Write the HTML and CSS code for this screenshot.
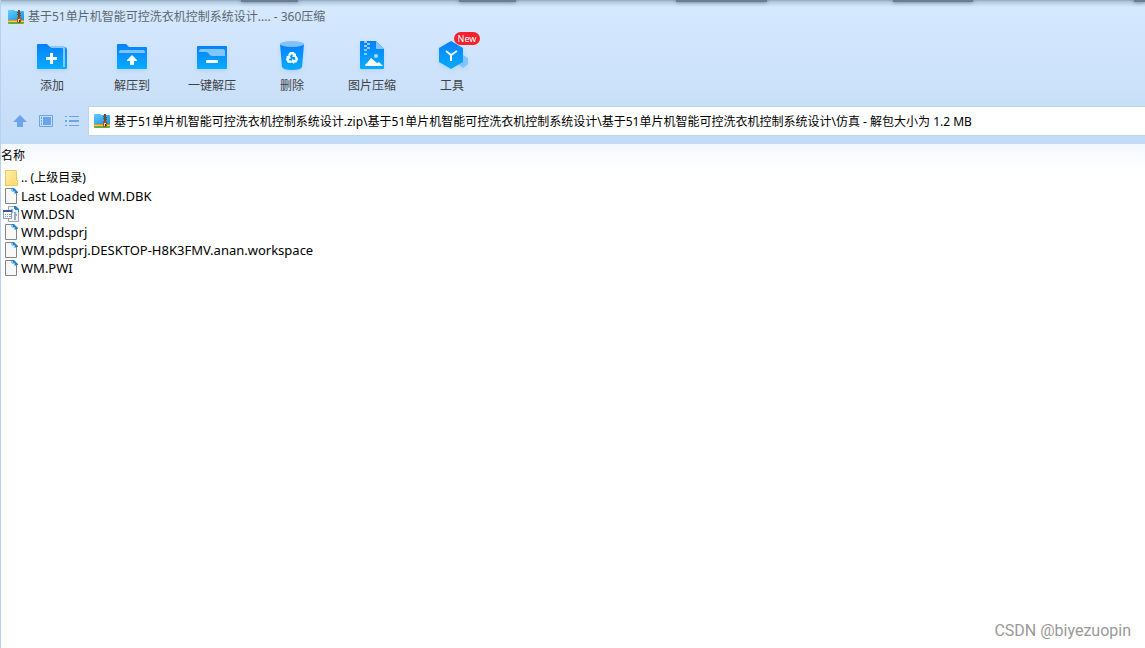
FILE: index.html
```html
<!DOCTYPE html>
<html lang="zh-CN">
<head>
<meta charset="utf-8">
<title>360压缩</title>
<meta name="viewport" content="width=device-width, initial-scale=1">
<link rel="stylesheet" href="styles.css">
</head>
<body>
<svg class="defs" aria-hidden="true">
  <defs>
    <linearGradient id="blue" x1="0" y1="0" x2="0" y2="1"><stop offset="0" stop-color="#0780fb"/><stop offset="1" stop-color="#06acff"/></linearGradient>
    <linearGradient id="sky" x1="0" y1="0" x2="1" y2="1"><stop offset="0" stop-color="#5fd0fb"/><stop offset="1" stop-color="#1f8ee2"/></linearGradient>
    <linearGradient id="yellow" x1="0" y1="0" x2="1" y2="1"><stop offset="0" stop-color="#ffefb0"/><stop offset="1" stop-color="#fbd768"/></linearGradient>
    <symbol id="archive" viewBox="0 0 16 16">
      <path d="M0 2q0-1 1-1h5l1 1h8q1 0 1 1v8H0z" fill="url(#sky)"/>
      <path d="M0 11h16v1H0z" fill="#ff8c1a"/><path d="M0 12h16v1H0z" fill="#ffc94a"/><path d="M0 13h16v1q0 1-1 1H1q-1 0-1-1z" fill="#5fae45"/>
      <path d="M10 1h2v8h-2z" fill="#6b4a36"/><path d="M9 3h1v1H9zm3 1h1v1h-1zM9 5h1v1H9zm3 1h1v1h-1z" fill="#2b5577"/>
      <path d="M9 9q0-1 1-1h2q1 0 1 1v4l-1 1h-2l-1-1z" fill="#a8540f"/>
      <path d="M10 10h2v3h-2z" fill="#ffd98a"/><path d="M11 11h1v2h-1z" fill="#57300f"/>
    </symbol>
    <symbol id="page" viewBox="0 0 16 16">
      <path d="M2.500.5h8l3 3v12h-11z" fill="#f8f8f8" stroke="#858585"/><path d="M9 0h2l4 4v1h-3V3H9z" fill="#2483cf"/><path d="M8 1h2v2h2v2h1v1h-2V4H9V3H8z" fill="#8dc7f0"/>
    </symbol>
    <symbol id="design" viewBox="0 0 16 16">
      <path d="M5.500.5h7l3 3v12h-10z" fill="#eef3f8" stroke="#9aa6b4"/><path d="M11 0h2l3 3v3h-1V4h-3V3h-1z" fill="#2483cf"/>
      <path d="M7 6h2V3M12 6v8M12 9h2" fill="none" stroke="#9aacbd" stroke-width="2"/>
      <path d="M.5 4.500h8v8h-8z" fill="#fff" stroke="#8d9cb8"/><path d="M0 4h9v2H0z" fill="#365ba7"/>
      <path d="M2 8h1v1H2zm2 0h1v1H4zm2 0h2v1H6zM2 10h1v1H2zm2 0h1v1H4zm2 0h2v1H6z" fill="#8d9eb4"/>
    </symbol>
    <symbol id="folder" viewBox="0 0 16 16">
      <path d="M2.500.5h11v10h1v5h-12z" fill="url(#yellow)" stroke="#ebc961"/><path d="M12.500 11.500h1" stroke="#fff"/>
    </symbol>
  </defs>
</svg>
<div class="window">
  <header class="chrome">
    <div class="glass" aria-hidden="true"><i></i><i></i><i></i><i></i><i></i></div>
    <div class="titlebar">
      <svg class="icon"><use href="#archive"/></svg>
      <h1 class="title">基于51单片机智能可控洗衣机控制系统设计.... - 360压缩</h1>
    </div>
    <nav class="toolbar" aria-label="工具栏">
      <button class="tool" type="button">
        <svg viewBox="0 0 32 32"><path d="M1 4q0-1 1-1h9l3 3h14q3 0 3 3v18q0 1-1 1H2q-1 0-1-1z" fill="url(#blue)"/><path d="M14 5h13q2 0 2 2v19h-2V8q0-1-1-1H15z" fill="#88c9ff"/><path d="M14 12h3v4h4v3h-4v4h-3v-4h-4v-3h4z" fill="#f5fbff"/></svg>
        <span>添加</span>
      </button>
      <button class="tool" type="button">
        <svg viewBox="0 0 32 32"><path d="M1 4q0-1 1-1h8l3 3h17q1 0 1 1v20q0 1-1 1H2q-1 0-1-1z" fill="url(#blue)"/><path d="M3 12v-1q0-2 2-2h22q2 0 2 2v1z" fill="#80c2ff"/><path d="M16 14l5 5v1h-3v4h-4v-4h-3v-1z" fill="#f5fbff"/></svg>
        <span>解压到</span>
      </button>
      <button class="tool" type="button">
        <svg viewBox="0 0 32 32"><rect x="1" y="5" width="30" height="23" rx="1" fill="url(#blue)"/><path d="M3 11v-1q0-2 2-2h22q2 0 2 2v5H16q-2 0-3-2t-3-2z" fill="#80c5ff"/><rect x="10" y="19" width="12" height="3" rx="1" fill="#f5fbff"/></svg>
        <span>一键解压</span>
      </button>
      <button class="tool" type="button">
        <svg viewBox="0 0 32 32"><path d="M4 3h24l-2 23q-1 3-10 3T6 26z" fill="url(#blue)"/><ellipse cx="16" cy="3" rx="12" ry="3" fill="#80c2ff"/><g fill="#f0faff"><path id="recycle" d="M12 14l2-3h4l1 2 1-1v4h-4l1-1-1-2-2 2z"/><use href="#recycle" transform="rotate(120 16 17)"/><use href="#recycle" transform="rotate(240 16 17)"/></g></svg>
        <span>删除</span>
      </button>
      <button class="tool" type="button">
        <svg viewBox="0 0 32 32"><path d="M4 1q0-1 1-1h15l8 8v19q0 1-1 1H5q-1 0-1-1z" fill="url(#blue)"/><path d="M20 0l8 8h-7q-1 0-1-1z" fill="#83c5ff"/><path d="M8 0h3v2H8zm3 2h3v2h-3zM8 4h3v2H8zm3 2h3v2h-3zM8 8h3v2H8zm0 4h3v2H8z" fill="#8dcaff"/><circle cx="20" cy="15" r="2" fill="#a9dcff"/><path d="M9 25q0-2 2-3l4-5 6 5 2-1 4 4z" fill="#f7fcff"/></svg>
        <span>图片压缩</span>
      </button>
      <button class="tool" type="button">
        <svg viewBox="0 0 32 32"><path d="M27 14l5 3v6l-5 4-5-4v-6z" fill="#82c4ff"/><path d="M15 0l12 7v14l-12 7-12-7V7z" fill="url(#blue)"/><path d="M10 10l5 4 6-4M15 14v6" fill="none" stroke="#f1faff" stroke-width="2"/></svg>
        <span>工具</span><b class="badge">New</b>
      </button>
    </nav>
    <div class="location">
      <button class="nav" type="button" aria-label="上级目录"><svg viewBox="0 0 16 16"><path d="M8 2l7 7h-4v5H5V9H1z" fill="#6ba4ec"/></svg></button>
      <button class="nav" type="button" aria-label="预览"><svg viewBox="0 0 16 16"><path d="M1.500 2.500h13v11h-13z" fill="none" stroke="#6ba4ec"/><path d="M3 4h1v2H3zm0 3h1v2H3zm0 3h1v2H3zm2-6h8v8H5z" fill="#6ba4ec"/></svg></button>
      <button class="nav" type="button" aria-label="列表"><svg viewBox="0 0 16 16"><path d="M1 3h2v1H1zm4 0h10v1H5zM1 7h2v2H1zm4 0h10v2H5zm-4 5h2v1H1zm4 0h10v1H5z" fill="#6ba4ec"/></svg></button>
      <label class="address">
        <svg class="icon"><use href="#archive"/></svg>
        <input type="text" aria-label="路径" readonly value="基于51单片机智能可控洗衣机控制系统设计.zip\基于51单片机智能可控洗衣机控制系统设计\基于51单片机智能可控洗衣机控制系统设计\仿真 - 解包大小为 1.2 MB">
      </label>
    </div>
  </header>
  <main class="content">
    <table class="files">
      <thead><tr><th scope="col">名称</th></tr></thead>
      <tbody>
        <tr><td><div class="file parent"><svg class="icon"><use href="#folder"/></svg><span>.. (上级目录)</span></div></td></tr>
        <tr><td><div class="file"><svg class="icon"><use href="#page"/></svg><span>Last Loaded WM.DBK</span></div></td></tr>
        <tr><td><div class="file"><svg class="icon"><use href="#design"/></svg><span>WM.DSN</span></div></td></tr>
        <tr><td><div class="file"><svg class="icon"><use href="#page"/></svg><span>WM.pdsprj</span></div></td></tr>
        <tr><td><div class="file"><svg class="icon"><use href="#page"/></svg><span>WM.pdsprj.DESKTOP-H8K3FMV.anan.workspace</span></div></td></tr>
        <tr><td><div class="file"><svg class="icon"><use href="#page"/></svg><span>WM.PWI</span></div></td></tr>
      </tbody>
    </table>
    <footer class="credit">CSDN @biyezuopin</footer>
  </main>
</div>
</body>
</html>
```
FILE: styles.css
```css
* { box-sizing: border-box; }
body { margin: 0; font: 12px/16px "Noto Sans", "Noto Sans CJK SC", sans-serif; color: #000; }
button, input { font: inherit; border: 0; padding: 0; background: none; }
.defs { position: absolute; width: 0; height: 0; }
.icon { width: 16px; height: 16px; flex: none; display: block; }
.window { min-height: 100vh; display: flex; flex-direction: column; border-left: 1px solid #b5d2f3; background: #fff; }
.chrome { position: relative; padding-bottom: 8px; background: linear-gradient(#d5eaff, #d1e6fd 40px, #c9dff8 106px, #c2dcf8); }
.glass { position: absolute; inset: 0 0 auto; height: 7px; overflow: hidden; background: linear-gradient(#8fa7be, #b5cbe0 2px, #d5eaff00); }
.glass i { position: absolute; top: -3px; left: 21%; width: 5%; height: 5px; background: #687d91; box-shadow: 0 0 4px #687d91; }
.glass i:nth-child(2) { left: 40%; width: 5%; }
.glass i:nth-child(3) { left: 59%; width: 8%; }
.glass i:nth-child(4) { left: 78%; width: 7%; }
.glass i:nth-child(5) { left: 99%; width: 1%; }
.titlebar { display: flex; align-items: center; gap: 4px; height: 33px; padding-left: 7px; }
.title { margin: 0; font-size: 12px; font-weight: 400; color: #5d6670; white-space: nowrap; }
.toolbar { display: flex; padding: 8px 0 0 11px; height: 73px; }
.tool { position: relative; width: 80px; display: flex; flex-direction: column; align-items: center; gap: 5px; color: #3f4145; white-space: nowrap; }
.tool svg { width: 32px; height: 32px; overflow: visible; filter: drop-shadow(0 2px 2px #5a9be533); }
.badge { position: absolute; top: -9px; left: 42px; width: 26px; height: 13px; border-radius: 7px; background: #f5222d; color: #fff; font: 9px/13px "Noto Sans", sans-serif; text-align: center; }
.location { display: flex; align-items: center; height: 30px; padding-left: 6px; }
.nav { width: 26px; height: 28px; display: grid; place-items: center; }
.nav svg { width: 16px; height: 16px; }
.address { flex: 1; min-width: 0; height: 30px; margin-left: 3px; padding-left: 5px; display: flex; align-items: center; gap: 4px; background: #fff; border: solid #bbd4ef; border-width: 1px 0 1px 1px; }
.address input { flex: 1; min-width: 0; height: 26px; outline: 0; color: #000; }
.content { flex: 1; display: flex; flex-direction: column; background: linear-gradient(#f2f8ff, #fff 26px); }
.files { width: 100%; border-collapse: collapse; }
.files th { height: 25px; padding: 0 0 2px; text-align: left; font-weight: 400; }
.files td { padding: 0; }
.file { height: 18px; padding-left: 2px; display: flex; align-items: center; gap: 2px; font-size: 13px; white-space: nowrap; }
.parent { font-size: 12px; }
.credit { margin-top: auto; padding: 0 14px 7px; text-align: right; font: 16px/20px Roboto, sans-serif; color: #999; }
```
